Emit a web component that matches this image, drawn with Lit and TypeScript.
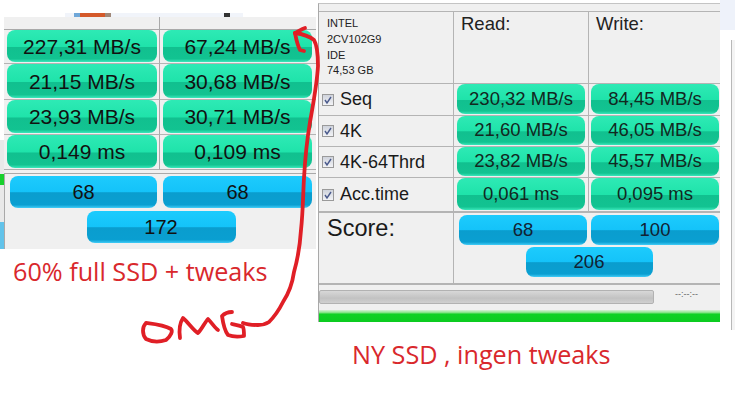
import {LitElement, html, css} from 'lit';
import {customElement} from 'lit/decorators.js';

const oldRows = [
  ['227,31 MB/s', '67,24 MB/s'],
  ['21,15 MB/s', '30,68 MB/s'],
  ['23,93 MB/s', '30,71 MB/s'],
  ['0,149 ms', '0,109 ms'],
];

const newRows = [
  ['Seq', '230,32 MB/s', '84,45 MB/s'],
  ['4K', '21,60 MB/s', '46,05 MB/s'],
  ['4K-64Thrd', '23,82 MB/s', '45,57 MB/s'],
  ['Acc.time', '0,061 ms', '0,095 ms'],
];

@customElement('app-root')
export class AppRoot extends LitElement {
  static styles = css`
    :host {
      display: block;
      width: 750px;
      height: 413px;
      position: relative;
      overflow: hidden;
      background: #fff;
      font-family: "Liberation Sans", Arial, sans-serif;
      color: #111;
    }

    /* the collage pieces sit on a free canvas */
    .piece {
      position: absolute;
    }

    .stub {
      left: 65px;
      top: 13px;
      width: 178px;
      height: 4px;
      background: #f1f4fa;
      display: flex;
      padding-left: 9px;
      box-sizing: border-box;
    }
    .stub i {
      display: block;
      height: 4px;
    }
    .stub .a { width: 6px; background: #6fa7d8; }
    .stub .b { width: 25px; background: #d4592a; }
    .stub .c { width: 6px; background: #a08878; margin-right: 113px; }
    .stub .d { width: 6px; background: #333; }

    .edge {
      left: 0;
      top: 140px;
      width: 4px;
      height: 109px;
      background: #e9e9e9;
    }
    .edge-green {
      left: 0;
      top: 174px;
      width: 4px;
      height: 11px;
      background: #17d02c;
    }
    .edge-blue {
      left: 0;
      top: 222px;
      width: 4px;
      height: 27px;
      background: #62c3ea;
    }

    .old {
      left: 4px;
      top: 17px;
      width: 312px;
      height: 232px;
      background: #f0f0f0;
      display: flex;
      flex-direction: column;
    }
    .old-top {
      height: 12px;
      flex: none;
      display: grid;
      grid-template-columns: 156px 1fr;
      border-bottom: 1px solid #a9a9a9;
    }
    .old-top div:first-child {
      border-right: 1px solid #a9a9a9;
    }
    .old-grid {
      display: grid;
      grid-template-columns: 156px 1fr;
      grid-template-rows: 34px 36px 35px 34px;
      border-bottom: 1px solid #b0b0b0;
    }
    .old-grid .cell {
      padding: 0 3px 1px 3px;
      display: flex;
      border-bottom: 1px solid #b4b4b4;
      box-sizing: border-box;
    }
    .old-grid .cell:nth-child(odd) {
      border-right: 1px solid #a9a9a9;
      padding-right: 2px;
    }
    .old-grid .cell:nth-child(even) {
      padding-right: 4px;
    }
    .old-grid .cell:nth-last-child(-n + 2) {
      border-bottom: none;
    }

    .old-score {
      margin-top: 3px;
      flex: 1;
      display: grid;
      grid-template-columns: 147px 149px;
      column-gap: 6px;
      grid-auto-rows: 32px;
      row-gap: 3px;
      padding: 2px 4px 0 5px;
      border-left: 1px solid #a9a9a9;
      border-top: 1px solid #a9a9a9;
    }
    .old-score .wide {
      grid-column: 1 / span 2;
      width: 149px;
      justify-self: center;
    }
    .old .pill {
      font-size: 21px;
    }
    .old .pill.blue {
      font-size: 20px;
    }

    .pill {
      flex: 1;
      display: flex;
      align-items: center;
      justify-content: center;
      border-radius: 8px;
      line-height: 1;
      box-sizing: border-box;
    }
    .green {
      background: linear-gradient(#2eeab5 0, #1fe3aa 52%, #11c08f 54%, #12c391 90%, #3ae8bb 100%);
    }
    .blue {
      background: linear-gradient(#1dcbfd 0, #14c3f9 50%, #0a9dce 52%, #0a9fd1 90%, #41cdf8 100%);
    }

    .new {
      left: 318px;
      top: 3px;
      width: 402px;
      height: 319px;
      background: #f0f0f0;
      display: flex;
      flex-direction: column;
      border-left: 1px solid #a9a9a9;
      box-sizing: border-box;
      border-top: 1px solid #c4c4c4;
    }
    .new-gap {
      height: 7px;
      flex: none;
    }
    .new-grid {
      display: grid;
      grid-template-columns: 135px 135px 131px;
      grid-template-rows: 72px 32px 31px 31px 33px;
      border-top: 1px solid #b4b4b4;
      border-bottom: 2px solid #b4b4b4;
    }
    .new-grid > div {
      border-right: 1px solid #b4b4b4;
      border-bottom: 1px solid #b4b4b4;
      box-sizing: border-box;
      display: flex;
      min-width: 0;
    }
    .new-grid > div:nth-child(3n) {
      border-right: none;
    }
    .new-grid > div:nth-last-child(-n + 3) {
      border-bottom: none;
    }
    .drive {
      flex-direction: column;
      padding: 4px 0 0 8px;
      font-size: 11px;
      line-height: 15.8px;
      color: #222;
    }
    .head {
      padding: 2px 0 0 7px;
      font-size: 18.5px;
      line-height: 20px;
      color: #222;
    }
    .label {
      align-items: center;
      padding-left: 3px;
      font-size: 18px;
      gap: 6px;
      color: #1a1a1a;
    }
    .check {
      width: 10px;
      height: 10px;
      flex: none;
      border: 1px solid #9a9a9a;
      background: linear-gradient(#cfd3dc, #f2f3f6);
      display: flex;
    }
    .check svg {
      width: 10px;
      height: 10px;
    }
    .val {
      padding: 0 3px 1px 3px;
    }
    .new-grid > .val:nth-child(3n) {
      padding: 0 1px 1px 2px;
    }
    .new .pill {
      font-size: 18.5px;
      color: #123;
    }
    .new .pill.green {
      color: #12281f;
    }

    .new-score {
      display: grid;
      grid-template-columns: 135px 1fr;
      height: 70px;
      flex: none;
    }
    .score-label {
      border-right: 1px solid #b4b4b4;
      padding: 3px 0 0 8px;
      font-size: 23.5px;
      line-height: 24px;
      color: #1a1a1a;
    }
    .score-vals {
      display: grid;
      grid-template-columns: 128px 128px;
      column-gap: 4px;
      grid-auto-rows: 30px;
      row-gap: 2px;
      padding: 2px 0 0 5px;
    }
    .score-vals .wide {
      grid-column: 1 / span 2;
      width: 127px;
      justify-self: center;
    }

    .new-progress {
      border-top: 2px solid #b4b4b4;
      display: flex;
      align-items: flex-start;
      padding-top: 5px;
    }
    .bar {
      width: 335px;
      height: 14px;
      background: linear-gradient(#d8d8d8, #c2c2c2 60%, #d0d0d0);
      border: 1px solid #b2b2b2;
      border-radius: 2px;
      box-sizing: border-box;
    }
    .time {
      margin-left: 21px;
      font-size: 9px;
      line-height: 9px;
      color: #666;
    }
    .run {
      height: 12px;
      margin-top: auto;
      background: linear-gradient(#d8f0d8 0, #8fe68f 20%, #0fd124 35%, #0bcc20 100%);
    }

    .side-top {
      left: 720px;
      top: 0;
      width: 15px;
      height: 30px;
      background: #eef2fa;
    }
    .side-low {
      left: 731px;
      top: 40px;
      width: 4px;
      height: 290px;
      background: #f4f4f4;
      border-left: 1px solid #b8b8b8;
      box-sizing: border-box;
    }

    .note {
      font-family: "Open Sans", "Noto Sans", sans-serif;
      color: #d9282c;
      font-size: 25.2px;
      line-height: 30px;
      white-space: nowrap;
    }
    .note-old {
      left: 13px;
      top: 256px;
    }
    .note-new {
      left: 352px;
      top: 339px;
    }

    .ink {
      left: 0;
      top: 0;
      width: 750px;
      height: 413px;
      pointer-events: none;
    }
    .ink path {
      fill: none;
      stroke: #e01f26;
      stroke-width: 3.8;
      stroke-linecap: round;
      stroke-linejoin: round;
    }
  `;

  renderCheck() {
    return html`<span class="check">
      <svg viewBox="0 0 10 10"><path d="M2 5l2 3 4-6" fill="none" stroke="#4a5a8c" stroke-width="1.4"/></svg>
    </span>`;
  }

  render() {
    return html`
      <div class="piece stub"><i class="a"></i><i class="b"></i><i class="c"></i><i class="d"></i></div>
      <div class="piece edge"></div>
      <div class="piece edge-green"></div>
      <div class="piece edge-blue"></div>

      <div class="piece old">
        <div class="old-top"><div></div><div></div></div>
        <div class="old-grid">
          ${oldRows.map((row) => row.map((v) => html`
            <div class="cell"><div class="pill green">${v}</div></div>
          `))}
        </div>
        <div class="old-score">
          <div class="pill blue">68</div>
          <div class="pill blue">68</div>
          <div class="pill blue wide">172</div>
        </div>
      </div>

      <div class="piece side-top"></div>
      <div class="piece side-low"></div>

      <div class="piece new">
        <div class="new-gap"></div>
        <div class="new-grid">
          <div class="drive">
            <span>INTEL</span><span>2CV102G9</span><span>IDE</span><span>74,53 GB</span>
          </div>
          <div class="head">Read:</div>
          <div class="head">Write:</div>
          ${newRows.map((row) => html`
            <div class="label">${this.renderCheck()}<span>${row[0]}</span></div>
            <div class="val"><div class="pill green">${row[1]}</div></div>
            <div class="val"><div class="pill green">${row[2]}</div></div>
          `)}
        </div>
        <div class="new-score">
          <div class="score-label">Score:</div>
          <div class="score-vals">
            <div class="pill blue">68</div>
            <div class="pill blue">100</div>
            <div class="pill blue wide">206</div>
          </div>
        </div>
        <div class="new-progress">
          <div class="bar"></div>
          <span class="time">--:--:--</span>
        </div>
        <div class="run"></div>
      </div>

      <div class="piece note note-old">60% full SSD + tweaks</div>
      <div class="piece note note-new">NY SSD , ingen tweaks</div>

      <svg class="piece ink" viewBox="0 0 750 413">
        <path d="M146 323C142 327 142 334 146 339C152 342 160 342 166 340C171 336 173 331 171 329C164 325 154 324 146 323"/>
        <path d="M180 338C179 331 179 324 183 318C188 322 193 330 198 333C202 329 205 322 208 319C212 323 215 328 218 330"/>
        <path d="M232 312C227 312 224 314 222 316C223 323 224 330 228 335C233 337 238 337 244 336C244 332 244 329 243 327C239 325 235 325 232 324"/>
        <path d="M243 323C248 325 254 325 258 325C263 325 266 324 269 322C275 316 279 310 283 302C287 296 292 286 294 272C298 258 300 245 301 230C303 212 303 195 304 178C305 160 307 140 310 122C313 105 317 84 318 66C318 55 317 45 314 40C309 36 303 34 295 33"/>
        <path d="M295 33C299 31 302 29 305 28"/>
        <path d="M295 33C296 38 297 44 300 50L304 51"/>
      </svg>
    `;
  }
}
